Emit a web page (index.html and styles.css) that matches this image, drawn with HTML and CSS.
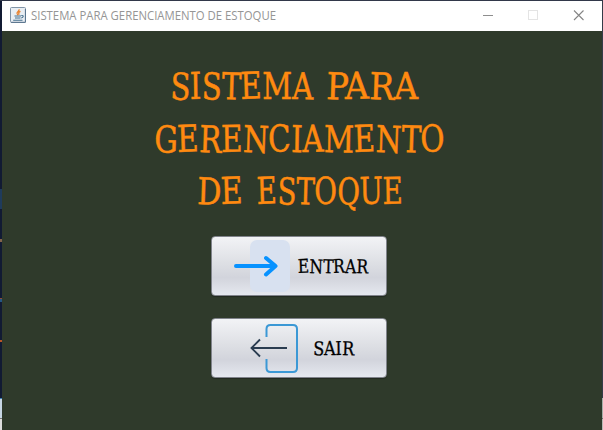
FILE: index.html
```
<!DOCTYPE html>
<html lang="pt-BR">
<head>
<meta charset="utf-8">
<title>SISTEMA PARA GERENCIAMENTO DE ESTOQUE</title>
<link rel="stylesheet" href="styles.css">
</head>
<body>
<div class="window">
  <header class="titlebar">
    <svg class="java" width="16" height="16" viewBox="0 0 16 16" fill="none">
      <rect x=".5" y=".5" width="15" height="15" rx="1" fill="#e9eef3" stroke="#8295a8"/>
      <path d="M1 15.3H15.4V2" stroke="#55718b"/>
      <path d="M9 2.2C10 4 6.3 4.8 7.1 6.5L8 8.3M10.5 4.4C8 5.4 8.6 6.3 9.3 7.6" stroke="#e9822f" stroke-width="1.3"/>
      <path d="M4.5 9H11M5 11H10.5M11.3 8.5C14.2 8 13.5 10.7 11.2 11M3.2 13.3H12.5" stroke="#47718f" stroke-width="1.1"/>
    </svg>
    <svg class="caption" width="256" height="20"><text x="0" y="14" textLength="245" lengthAdjust="spacingAndGlyphs">SISTEMA PARA GERENCIAMENTO DE ESTOQUE</text></svg>
    <svg class="controls" width="106" height="12" viewBox="0 0 106 12" fill="none">
      <path d="M1 6.5H11" stroke="#8e8e8e"/>
      <rect x="46.500" y="1.500" width="9" height="9" stroke="#e4e4e4"/>
      <path d="M92 1.500L101.500 11M101.500 1.500L92 11" stroke="#858585" stroke-width="1.100"/>
    </svg>
  </header>
  <main class="content">
    <h1 class="title">
      <svg width="300" height="53">
        <text x="20" y="44" textLength="143" lengthAdjust="spacingAndGlyphs" rotate="3 -1 2 2 -2 0 1">SISTEMA</text>
        <text x="176" y="44" textLength="92" lengthAdjust="spacingAndGlyphs" rotate="2 -1 2 0">PARA</text>
      </svg>
      <svg width="300" height="53">
        <text x="4" y="44" textLength="291" lengthAdjust="spacingAndGlyphs" rotate="2 -2 2 -1 2 -2 1 -1 1 -2 2 2 -2">GERENCIAMENTO</text>
      </svg>
      <svg width="300" height="53">
        <text x="47" y="43" textLength="46" lengthAdjust="spacingAndGlyphs" rotate="2 -2">DE</text>
        <text x="107" y="43" textLength="146" lengthAdjust="spacingAndGlyphs" rotate="-2 2 2 -1 2 -1 -1">ESTOQUE</text>
      </svg>
    </h1>
    <div class="actions">
      <button class="btn">
        <svg width="174" height="58" viewBox="0 0 174 58" fill="none">
          <rect x="38" y="3" width="40" height="52" rx="7" fill="#d8e1f0"/>
          <path d="M24 29H63M54 21L63.500 29L54 37.500" stroke="#0792ff" stroke-width="4" stroke-linecap="round" stroke-linejoin="round"/>
          <text x="86" y="36" textLength="70" lengthAdjust="spacingAndGlyphs" rotate="-2 2 2 -2 1 2">ENTRAR</text>
        </svg>
      </button>
      <button class="btn">
        <svg width="174" height="58" viewBox="0 0 174 58" fill="none">
          <path d="M54.500 18V10Q54.500 6 58.500 6H81Q85 6 85 10V49Q85 53 81 53H58.500Q54.500 53 54.500 49V40" stroke="#3b98d5" stroke-width="2"/>
          <path d="M75 29H40M48 20.500L39.500 29L48 37.500" stroke="#2a3c50" stroke-width="1.900"/>
          <text x="101" y="36" textLength="41" lengthAdjust="spacingAndGlyphs" rotate="3 0 -1 2">SAIR</text>
        </svg>
      </button>
    </div>
  </main>
</div>
</body>
</html>
```
FILE: styles.css
```
* { box-sizing: border-box; }
body {
  margin: 0;
  width: 603px;
  height: 430px;
  overflow: hidden;
  padding: 1px 1px 0 2px;
  background:
    linear-gradient(#32384a, #32384a) 0 0 / 100% 1px no-repeat,
    linear-gradient(#343b48 398px, #a6afa9 398px 418px, #6d706c 418px 419px, #b8bab6 419px) 100% 0 / 1px 100% no-repeat,
    linear-gradient(#111a33 189px, #1f3b5c 189px 209px, #111a33 209px 239px, #82634c 239px 242px, #111a33 242px 298px, #8b4c3b 298px 299px, #245783 299px 302px, #111a33 302px 340px, #b95527 340px 342px, #111a33 342px 398px, #3d82b4 398px 399px, #c7d6e4 399px 418px, #777 418px 419px, #ddd 419px);
}
.window { display: flex; flex-direction: column; height: 429px; background: #2f3a2b; }
.titlebar { display: flex; align-items: center; flex: 0 0 30px; padding: 0 14px 0 8px; background: #fff; }
.java { margin-top: -2px; }
.caption { margin-left: 5px; font: 12px "Open Sans", "Noto Sans", sans-serif; fill: #959595; }
.controls { margin: -2px 0 0 auto; }
.content { display: flex; flex-direction: column; align-items: center; flex: 1; padding-top: 24px; }
.title { display: flex; flex-direction: column; width: 300px; margin: 0 0 0 -4px; font: 400 37px "DejaVu Serif Condensed", "DejaVu Serif", serif; fill: #ff8a10; stroke: #ff8a10; stroke-width: .5px; }
.title svg { display: block; overflow: visible; }
.actions { display: flex; flex-direction: column; gap: 22px; margin: 22px 0 0 -6px; }
.btn {
  display: block;
  width: 176px;
  height: 60px;
  padding: 0;
  border: 1px solid #80838b;
  border-radius: 4px;
  background: linear-gradient(#f2f3f6, #dcdee3 48%, #d2d4dc 70%, #e5e8ef);
  box-shadow: 0 1px 1px #222a20;
  font: 400 19px "DejaVu Serif Condensed", "DejaVu Serif", serif;
}
.btn svg { display: block; }
.btn text { fill: #000; stroke: #000; stroke-width: .3px; }
```
